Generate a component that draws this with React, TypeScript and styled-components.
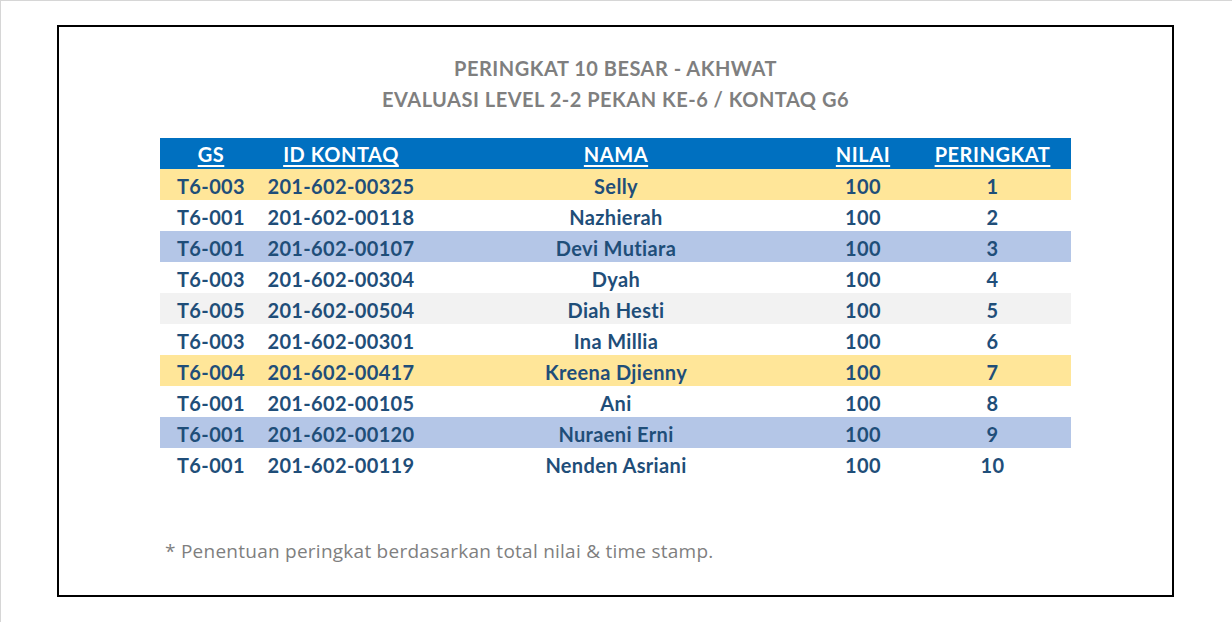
import React from "react";
import styled, { createGlobalStyle } from "styled-components";

const GlobalStyle = createGlobalStyle`
  html, body {
    margin: 0;
    padding: 0;
    background: #ffffff;
  }
  body {
    font-family: "Lato", "Open Sans", sans-serif;
  }
`;

const Page = styled.div`
  width: 1232px;
  height: 622px;
  box-sizing: border-box;
  border-top: 1px solid #d6d6d6;
  border-left: 1px solid #d6d6d6;
  padding: 24px 0 0 56px;
`;

const Frame = styled.div`
  width: 1117px;
  height: 572px;
  box-sizing: border-box;
  border: 2px solid #000000;
  padding: 0 101px;
  display: flex;
  flex-direction: column;
`;

const Title = styled.div`
  margin-top: 26px;
  display: flex;
  flex-direction: column;
  align-items: center;
  color: #7f7f7f;
  font-weight: 700;
  font-size: 20px;
  letter-spacing: 0.5px;
  line-height: 31px;
`;

const Table = styled.div`
  margin-top: 23px;
  display: flex;
  flex-direction: column;
`;

const Row = styled.div<{ $bg?: string }>`
  display: grid;
  grid-template-columns: 102px 158px 392px 102px 157px;
  height: 31px;
  box-sizing: border-box;
  padding-top: 2px;
  align-items: center;
  background: ${(p) => p.$bg || "#ffffff"};
`;

const HeadRow = styled(Row)`
  background: #0070c0;
  padding-top: 1px;
`;

const HeadCell = styled.div`
  text-align: center;
  color: #ffffff;
  font-weight: 700;
  font-size: 20px;
  letter-spacing: 0.55px;
  text-decoration: underline;
  text-decoration-thickness: 2px;
  text-underline-offset: 3px;
`;

const Cell = styled.div`
  text-align: center;
  color: #1f4e79;
  font-weight: 700;
  font-size: 20px;
  letter-spacing: 0.35px;
`;

const Note = styled.div`
  margin-top: auto;
  margin-bottom: 31px;
  padding-left: 5px;
  color: #7f7f7f;
  font-family: "Open Sans", "Lato", sans-serif;
  font-size: 19px;
  letter-spacing: 0.25px;
`;

const YELLOW = "#ffe699";
const BLUE = "#b4c6e7";
const GREY = "#f2f2f2";

const rows = [
  { gs: "T6-003", id: "201-602-00325", nama: "Selly", bg: YELLOW },
  { gs: "T6-001", id: "201-602-00118", nama: "Nazhierah" },
  { gs: "T6-001", id: "201-602-00107", nama: "Devi Mutiara", bg: BLUE },
  { gs: "T6-003", id: "201-602-00304", nama: "Dyah" },
  { gs: "T6-005", id: "201-602-00504", nama: "Diah Hesti", bg: GREY },
  { gs: "T6-003", id: "201-602-00301", nama: "Ina Millia" },
  { gs: "T6-004", id: "201-602-00417", nama: "Kreena Djienny", bg: YELLOW },
  { gs: "T6-001", id: "201-602-00105", nama: "Ani" },
  { gs: "T6-001", id: "201-602-00120", nama: "Nuraeni Erni", bg: BLUE },
  { gs: "T6-001", id: "201-602-00119", nama: "Nenden Asriani" },
];

const App: React.FC = () => {
  return (
    <>
      <GlobalStyle />
      <Page>
        <Frame>
          <Title>
            <span>PERINGKAT 10 BESAR - AKHWAT</span>
            <span>EVALUASI LEVEL 2-2 PEKAN KE-6 / KONTAQ G6</span>
          </Title>
          <Table>
            <HeadRow>
              <HeadCell>GS</HeadCell>
              <HeadCell>ID KONTAQ</HeadCell>
              <HeadCell>NAMA</HeadCell>
              <HeadCell>NILAI</HeadCell>
              <HeadCell>PERINGKAT</HeadCell>
            </HeadRow>
            {rows.map((r, i) => (
              <Row key={i} $bg={r.bg}>
                <Cell>{r.gs}</Cell>
                <Cell>{r.id}</Cell>
                <Cell>{r.nama}</Cell>
                <Cell>100</Cell>
                <Cell>{i + 1}</Cell>
              </Row>
            ))}
          </Table>
          <Note>* Penentuan peringkat berdasarkan total nilai &amp; time stamp.</Note>
        </Frame>
      </Page>
    </>
  );
};

export default App;
